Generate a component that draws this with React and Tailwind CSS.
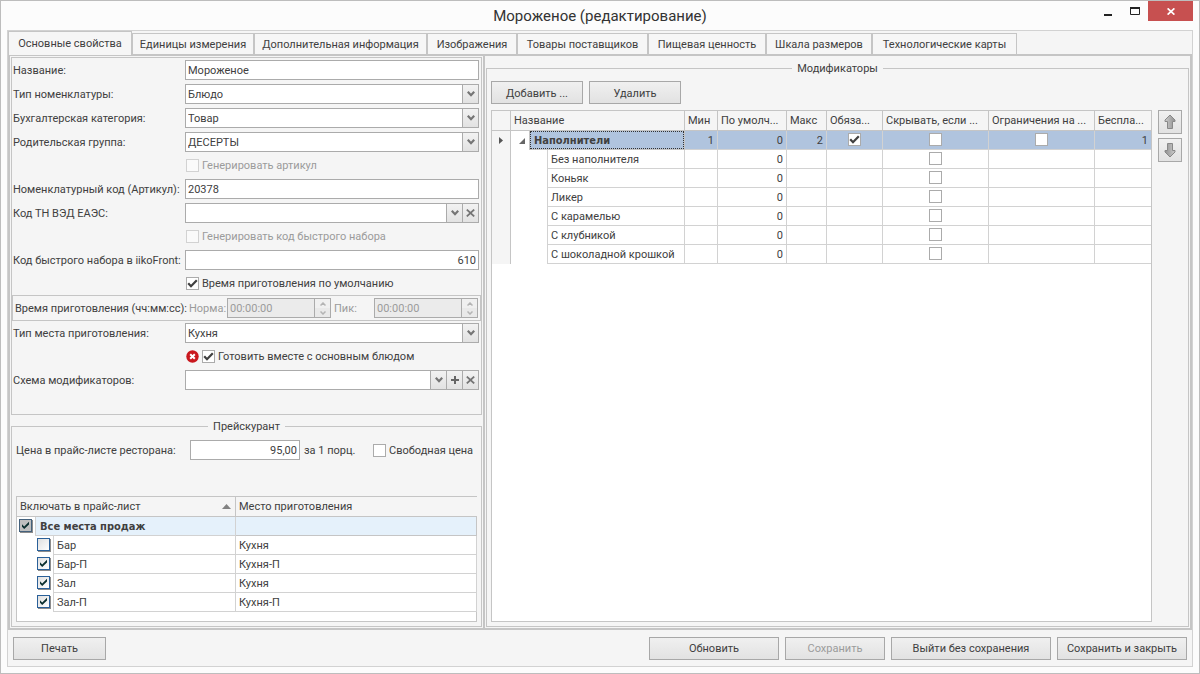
import React from "react";

const tabs = [
  ["Основные свойства", "min-w-[124px]"],
  ["Единицы измерения", "min-w-[122px]"],
  ["Дополнительная информация", "min-w-[173px]"],
  ["Изображения", "min-w-[90px]"],
  ["Товары поставщиков", "min-w-[131px]"],
  ["Пищевая ценность", "min-w-[118px]"],
  ["Шкала размеров", "min-w-[106px]"],
  ["Технологические карты", "min-w-[145px]"],
];

const modifiers = [
  "Без наполнителя",
  "Коньяк",
  "Ликер",
  "С карамелью",
  "С клубникой",
  "С шоколадной крошкой",
];

const places = [
  { name: "Бар", kitchen: "Кухня", on: false },
  { name: "Бар-П", kitchen: "Кухня-П", on: true },
  { name: "Зал", kitchen: "Кухня", on: true },
  { name: "Зал-П", kitchen: "Кухня-П", on: true },
];

function Chevron() {
  return (
    <svg width="8" height="6" viewBox="0 0 8 6" aria-hidden="true">
      <path d="M0.8 0.8L4 4.2L7.2 0.8" fill="none" stroke="#757575" strokeWidth="2.2" />
    </svg>
  );
}

function Cross() {
  return (
    <svg width="9" height="8" viewBox="0 0 9 8" aria-hidden="true">
      <path d="M0.8 0.6L8.2 7.4M8.2 0.6L0.8 7.4" stroke="#757575" strokeWidth="1.8" />
    </svg>
  );
}

function Plus() {
  return (
    <svg width="8" height="8" viewBox="0 0 8 8" aria-hidden="true">
      <path d="M0 4H8M4 0V8" stroke="#666" strokeWidth="2" />
    </svg>
  );
}

function Check({ id, label, checked, disabled }) {
  return (
    <span className="inline-grid size-[13px] shrink-0 place-items-center">
      <input
        id={id}
        type="checkbox"
        aria-label={label}
        defaultChecked={checked}
        disabled={disabled}
        className="peer [grid-area:1/1] size-[13px] appearance-none border border-[#ababab] bg-white disabled:border-[#d2d2d2] disabled:bg-[#fafafa]"
      />
      <svg
        width="11"
        height="11"
        viewBox="0 0 11 11"
        aria-hidden="true"
        className="pointer-events-none [grid-area:1/1] hidden peer-checked:block"
      >
        <path d="M1.2 5.2L4 8.2L9.8 2.2" fill="none" stroke="#404040" strokeWidth="2.2" />
      </svg>
    </span>
  );
}

function TreeCheck({ label, checked, mixed }) {
  return (
    <span className="inline-grid size-[13px] shrink-0 place-items-center">
      <input
        type="checkbox"
        aria-label={label}
        defaultChecked={checked}
        className={
          mixed
            ? "peer [grid-area:1/1] size-[13px] appearance-none border border-[#44617c] bg-[#bfbfbf] shadow-[1px_1px_0_#8c8c8c]"
            : "peer [grid-area:1/1] size-[13px] appearance-none border border-[#2a6099] bg-linear-to-br from-[#e0e0e0] to-white shadow-[1px_1px_0_#8c8c8c]"
        }
      />
      <svg
        width="9"
        height="9"
        viewBox="0 0 9 9"
        aria-hidden="true"
        className="pointer-events-none [grid-area:1/1] hidden peer-checked:block"
      >
        <path d="M1 3.2V5.8L3.2 8L8 3.4V0.8L3.2 5.4Z" fill="#0b2f2f" />
      </svg>
    </span>
  );
}

function Btn({ children, className, disabled }) {
  return (
    <button
      type="button"
      disabled={disabled}
      className={
        "h-[23px] border border-[#a8a8a8] bg-linear-to-b from-[#f0f0f0] to-[#e2e2e2] px-1 pt-px text-center whitespace-nowrap disabled:text-[#9b9b9b] " +
        className
      }
    >
      {children}
    </button>
  );
}

function Row({ label, id, children }) {
  return (
    <div className="flex h-6 items-center pr-[2px] pl-px">
      <label htmlFor={id} className="w-[172px] shrink-0 whitespace-nowrap">
        {label}
      </label>
      {children}
    </div>
  );
}

function TickRow({ id, label, checked, disabled, icon }) {
  return (
    <div className="flex h-[23px] items-center gap-[3px] pl-[174px]">
      {icon}
      <Check id={id} checked={checked} disabled={disabled} />
      <label htmlFor={id} className={disabled ? "whitespace-nowrap text-[#9b9b9b]" : "whitespace-nowrap"}>
        {label}
      </label>
    </div>
  );
}

function SelectRow({ id, label, value }) {
  return (
    <Row id={id} label={label}>
      <div className="grid h-5 min-w-0 flex-1 border border-[#ababab] bg-white">
        <select id={id} className="[grid-area:1/1] w-full appearance-none bg-transparent pr-5 pl-[2px] outline-none">
          <option>{value}</option>
        </select>
        <span className="pointer-events-none [grid-area:1/1] grid w-4 place-items-center justify-self-end border-l border-[#ababab] bg-linear-to-b from-[#f2f2f2] to-[#e2e2e2]">
          <Chevron />
        </span>
      </div>
    </Row>
  );
}

function TextField({ id, value, className }) {
  return (
    <input
      id={id}
      type="text"
      defaultValue={value}
      className={"h-5 min-w-0 border border-[#ababab] bg-white px-[2px] outline-none " + className}
    />
  );
}

function FieldButton({ label, children }) {
  return (
    <button
      type="button"
      aria-label={label}
      className="grid w-4 shrink-0 place-items-center border-l border-[#ababab] bg-linear-to-b from-[#f2f2f2] to-[#e2e2e2]"
    >
      {children}
    </button>
  );
}

function ComboRow({ id, label, plus }) {
  return (
    <Row id={id} label={label}>
      <div className="flex h-5 min-w-0 flex-1 border border-[#ababab] bg-white">
        <input id={id} type="text" className="min-w-0 flex-1 px-[2px] outline-none" />
        <FieldButton label="Открыть список">
          <Chevron />
        </FieldButton>
        {plus && (
          <FieldButton label="Добавить">
            <Plus />
          </FieldButton>
        )}
        <FieldButton label="Очистить">
          <Cross />
        </FieldButton>
      </div>
    </Row>
  );
}

function TimeField({ id }) {
  return (
    <div className="flex h-5 min-w-0 flex-1 border border-[#ababab] bg-[#ebebeb]">
      <input id={id} type="text" disabled defaultValue="00:00:00" className="min-w-0 flex-1 px-[2px] text-[#9b9b9b]" />
      <span className="flex w-4 shrink-0 flex-col border-l border-[#ababab]">
        <button type="button" disabled aria-label="Больше" className="grid flex-1 place-items-center bg-[#f0f0f0]">
          <svg width="6" height="4" viewBox="0 0 6 4" aria-hidden="true">
            <path d="M0.5 3.5L3 1L5.5 3.5" fill="none" stroke="#b4b4b4" strokeWidth="1.5" />
          </svg>
        </button>
        <button type="button" disabled aria-label="Меньше" className="grid flex-1 place-items-center bg-[#e9e9e9]">
          <svg width="6" height="4" viewBox="0 0 6 4" aria-hidden="true">
            <path d="M0.5 0.5L3 3L5.5 0.5" fill="none" stroke="#b4b4b4" strokeWidth="1.5" />
          </svg>
        </button>
      </span>
    </div>
  );
}

function ErrorIcon() {
  return (
    <svg width="13" height="13" viewBox="0 0 13 13" className="shrink-0" aria-hidden="true">
      <circle cx="6.5" cy="6.5" r="6.2" fill="#c9181e" />
      <path d="M4.2 4.2L8.8 8.8M8.8 4.2L4.2 8.8" stroke="#fff" strokeWidth="2" />
    </svg>
  );
}

function ArrowIcon({ down }) {
  return (
    <svg width="12" height="16" viewBox="0 0 12 16" className={down ? "rotate-180" : ""} aria-hidden="true">
      <defs>
        <linearGradient id={down ? "arrowDown" : "arrowUp"} x1="0" x2="1">
          <stop offset="0" stopColor="#cccccc" />
          <stop offset="1" stopColor="#909090" />
        </linearGradient>
      </defs>
      <path
        d="M6 1L11 6V7.5H8.5V14.5H3.5V7.5H1V6Z"
        fill={down ? "url(#arrowDown)" : "url(#arrowUp)"}
        stroke="#888"
        strokeWidth="1"
      />
    </svg>
  );
}

const head = "h-5 border-r border-b border-[#c5c5c5] bg-[#f5f5f5] px-[3px] py-0 text-left font-normal whitespace-nowrap overflow-hidden";
const lastHead = "h-5 border-b border-[#c5c5c5] bg-[#f5f5f5] px-[3px] py-0 text-left font-normal whitespace-nowrap overflow-hidden";
const cell = "h-[19px] border-r border-b border-[#d2d2d2] px-[3px] py-0 whitespace-nowrap overflow-hidden";

function CheckCell({ label, checked, selected }) {
  return (
    <td className={"h-[19px] border-r border-b border-[#d2d2d2] p-0 " + (selected ? "bg-[#b0c4de]" : "")}>
      <div className="flex h-[18px] items-start justify-center pt-[2px]">
        <Check label={label} checked={checked} />
      </div>
    </td>
  );
}

function PriceTable() {
  return (
    <div className="flex flex-1 flex-col border-t border-b border-l border-[#c5c5c5] bg-white">
      <table className="w-full table-fixed border-separate border-spacing-0">
        <colgroup>
          <col className="w-[219px]" />
          <col />
        </colgroup>
        <thead>
          <tr>
            <th scope="col" className={head}>
              <span className="flex items-center justify-between">
                Включать в прайс-лист
                <svg width="9" height="5" viewBox="0 0 9 5" className="mr-px" aria-hidden="true">
                  <path d="M0 5L4.5 0L9 5Z" fill="#828282" />
                </svg>
              </span>
            </th>
            <th scope="col" className={lastHead}>Место приготовления</th>
          </tr>
        </thead>
        <tbody>
          <tr>
            <td className="h-[19px] border-r border-[#d2d2d2] p-0">
              <div className="flex h-[19px]">
                <span className="flex w-[18px] shrink-0 justify-center pt-[2px] pr-px">
                  <TreeCheck label="Все места продаж" checked mixed />
                </span>
                <span className="flex flex-1 items-center border-b border-l border-[#d2d2d2] bg-[#e5f1fb] pl-1 font-['DejaVu_Sans_Condensed','DejaVu_Sans',sans-serif] font-bold">
                  Все места продаж
                </span>
              </div>
            </td>
            <td className="h-[19px] border-r border-b border-[#c5c5c5] bg-[#e5f1fb] p-0" />
          </tr>
          {places.map((p) => (
            <tr key={p.name}>
              <td className="h-[19px] border-r border-[#d2d2d2] p-0">
                <div className="flex h-[19px]">
                  <span className="flex w-9 shrink-0 justify-end pt-[2px] pr-[3px]">
                    <TreeCheck label={p.name} checked={p.on} />
                  </span>
                  <span className="flex flex-1 items-center border-b border-l border-[#d2d2d2] pl-[3px]">
                    {p.name}
                  </span>
                </div>
              </td>
              <td className={cell}>{p.kitchen}</td>
            </tr>
          ))}
        </tbody>
      </table>
      <div className="flex-1 border-r border-[#c5c5c5]" />
    </div>
  );
}

function ModifierTable() {
  return (
    <div className="min-w-0 flex-1 border border-[#c5c5c5] bg-white">
      <table className="w-full table-fixed border-separate border-spacing-0">
        <colgroup>
          <col className="w-[19px]" />
          <col />
          <col className="w-[33px]" />
          <col className="w-[69px]" />
          <col className="w-[40px]" />
          <col className="w-[56px]" />
          <col className="w-[106px]" />
          <col className="w-[106px]" />
          <col className="w-[56px]" />
        </colgroup>
        <thead>
          <tr>
            <th className={head} aria-label="Указатель строки" />
            <th scope="col" className={head}>Название</th>
            <th scope="col" className={head}>Мин</th>
            <th scope="col" className={head}>По умолч...</th>
            <th scope="col" className={head}>Макс</th>
            <th scope="col" className={head}>Обяза...</th>
            <th scope="col" className={head}>Скрывать, если ...</th>
            <th scope="col" className={head}>Ограничения на ...</th>
            <th scope="col" className={lastHead}>Беспла...</th>
          </tr>
        </thead>
        <tbody>
          <tr>
            <td className="h-[19px] border-r border-[#c5c5c5] bg-[#f5f5f5] p-0">
              <svg width="4" height="7" viewBox="0 0 4 7" className="mx-auto" aria-hidden="true">
                <path d="M0 0L4 3.5L0 7Z" fill="#555" />
              </svg>
            </td>
            <td className="h-[19px] border-r border-[#c5c5c5] p-0">
              <div className="flex h-[19px] items-center">
                <button type="button" aria-label="Свернуть" className="grid w-[18px] shrink-0 place-items-center pl-1">
                  <svg width="6" height="6" viewBox="0 0 6 6" aria-hidden="true">
                    <path d="M6 0V6H0Z" fill="#666" />
                  </svg>
                </button>
                <span className="flex h-full flex-1 border-b border-l border-[#c5c5c5] bg-[#b0c4de]">
                  <span className="flex flex-1 items-center border border-dotted border-[#333] pl-[3px] font-['DejaVu_Sans_Condensed','DejaVu_Sans',sans-serif] font-bold">
                    Наполнители
                  </span>
                </span>
              </div>
            </td>
            <td className={cell + " bg-[#b0c4de] text-right"}>1</td>
            <td className={cell + " bg-[#b0c4de] text-right"}>0</td>
            <td className={cell + " bg-[#b0c4de] text-right"}>2</td>
            <CheckCell selected label="Обязательный" checked />
            <CheckCell selected label="Скрывать" />
            <CheckCell selected label="Ограничения" />
            <td className="h-[19px] border-b border-[#d2d2d2] bg-[#b0c4de] px-[3px] py-0 text-right">1</td>
          </tr>
          {modifiers.map((m) => (
            <tr key={m}>
              <td className="h-[19px] border-r border-[#c5c5c5] bg-[#f5f5f5] p-0" />
              <td className="h-[19px] border-r border-[#d2d2d2] p-0">
                <div className="flex h-[19px] pl-9">
                  <span className="flex flex-1 items-center border-b border-l border-[#d2d2d2] pl-[3px] whitespace-nowrap">
                    {m}
                  </span>
                </div>
              </td>
              <td className={cell} />
              <td className={cell + " text-right"}>0</td>
              <td className={cell} />
              <td className={cell} />
              <CheckCell label={"Скрывать: " + m} />
              <td className={cell} />
              <td className="h-[19px] border-b border-[#d2d2d2] p-0" />
            </tr>
          ))}
        </tbody>
      </table>
    </div>
  );
}

export default function App() {
  return (
    <div className="flex min-h-screen flex-col border border-[#bdbdbd] bg-[#fcfcfc] px-[6px] pb-[6px] font-['Roboto','Noto_Sans',sans-serif] text-[11px] leading-[15px] text-[#404040]">
      <header className="grid h-[29px] grid-cols-[1fr_auto_1fr]">
        <h1 className="col-start-2 self-center text-[15px] leading-5 text-[#333]">
          Мороженое (редактирование)
        </h1>
        <div className="flex h-5 justify-end">
          <button type="button" aria-label="Свернуть окно" className="grid w-[27px] place-items-center">
            <svg width="8" height="10" viewBox="0 0 8 10" aria-hidden="true">
              <path d="M0 9H8" stroke="#222" strokeWidth="2" />
            </svg>
          </button>
          <button type="button" aria-label="Развернуть окно" className="grid w-[27px] place-items-center">
            <svg width="10" height="8" viewBox="0 0 10 8" aria-hidden="true">
              <path d="M0.5 1V7.5H9.5V1" fill="none" stroke="#222" />
              <path d="M0 1H10" stroke="#222" strokeWidth="2" />
            </svg>
          </button>
          <button type="button" aria-label="Закрыть окно" className="grid w-[45px] place-items-center bg-[#c75050]">
            <svg width="8" height="7" viewBox="0 0 8 7" aria-hidden="true">
              <path d="M0.6 0.4L7.4 6.6M7.4 0.4L0.6 6.6" stroke="#fff" strokeWidth="1.7" />
            </svg>
          </button>
        </div>
      </header>

      <main className="flex flex-1 flex-col border border-[#d2d2d2] bg-[#f5f5f5]">
        <nav role="tablist" className="flex h-[23px] items-start">
          {tabs.map(([name, width], i) => (
            <button
              key={name}
              type="button"
              role="tab"
              aria-selected={i === 0}
              className={
                (i === 0 ? "relative z-10 h-6 " : "mt-[2px] h-[21px] ") +
                "border-t border-r border-l border-[#c5c5c5] bg-[#f6f6f6] text-center whitespace-nowrap " +
                width
              }
            >
              {name}
            </button>
          ))}
        </nav>

        <div className="flex flex-1 border-2 border-[#c5c5c5]">
          <section className="flex w-[473px] shrink-0 flex-col p-px">
            <div className="h-[358px] border border-[#c5c5c5]">
              <Row id="name" label="Название:">
                <TextField id="name" value="Мороженое" className="flex-1" />
              </Row>
              <SelectRow id="type" label="Тип номенклатуры:" value="Блюдо" />
              <SelectRow id="category" label="Бухгалтерская категория:" value="Товар" />
              <SelectRow id="group" label="Родительская группа:" value="ДЕСЕРТЫ" />
              <TickRow id="genSku" label="Генерировать артикул" disabled />
              <Row id="sku" label="Номенклатурный код (Артикул):">
                <TextField id="sku" value="20378" className="flex-1" />
              </Row>
              <ComboRow id="tnved" label="Код ТН ВЭД ЕАЭС:" />
              <TickRow id="genFast" label="Генерировать код быстрого набора" disabled />
              <Row id="fast" label="Код быстрого набора в iikoFront:">
                <TextField id="fast" value="610" className="flex-1 text-right" />
              </Row>
              <TickRow id="defTime" label="Время приготовления по умолчанию" checked />
              <div className="flex h-[26px] items-center border border-[#c5c5c5] px-[2px]">
                <span className="w-[174px] shrink-0 whitespace-nowrap">Время приготовления (чч:мм:сс):</span>
                <label htmlFor="norm" className="w-[38px] shrink-0 text-[#9b9b9b]">Норма:</label>
                <TimeField id="norm" />
                <label htmlFor="peak" className="w-[43px] shrink-0 pl-[3px] text-[#9b9b9b]">Пик:</label>
                <TimeField id="peak" />
              </div>
              <SelectRow id="place" label="Тип места приготовления:" value="Кухня" />
              <TickRow id="together" label="Готовить вместе с основным блюдом" checked icon={<ErrorIcon />} />
              <ComboRow id="scheme" label="Схема модификаторов:" plus />
            </div>

            <fieldset className="mt-[3px] flex flex-1 flex-col border border-[#c5c5c5] px-1 pb-1">
              <legend className="mx-auto px-[5px] pt-[2px] leading-[14px]">Прейскурант</legend>
              <div className="mt-[6px] mb-9 flex h-5 items-center">
                <label htmlFor="price" className="w-[174px] shrink-0 whitespace-nowrap">Цена в прайс-листе ресторана:</label>
                <TextField id="price" value="95,00" className="w-[110px] text-right" />
                <span className="w-[73px] pl-1 whitespace-nowrap">за 1 порц.</span>
                <Check id="free" />
                <label htmlFor="free" className="pl-[3px] whitespace-nowrap">Свободная цена</label>
              </div>
              <PriceTable />
            </fieldset>
          </section>

          <section className="flex min-w-0 flex-1 border-l-2 border-[#c5c5c5] px-px pt-1 pb-px">
            <fieldset className="flex min-w-0 flex-1 flex-col border border-[#c5c5c5] px-1 pb-1">
              <legend className="mx-auto px-[5px] pt-[2px] leading-[14px]">Модификаторы</legend>
              <div className="mt-[5px] mb-[6px] flex gap-[6px]">
                <Btn className="w-[92px]">Добавить ...</Btn>
                <Btn className="w-[92px]">Удалить</Btn>
              </div>
              <div className="flex flex-1 gap-[6px] pr-[2px]">
                <ModifierTable />
                <div className="flex flex-col gap-1">
                  <button type="button" aria-label="Вверх" className="grid size-6 place-items-center border border-[#a8a8a8] bg-linear-to-b from-[#f0f0f0] to-[#e2e2e2]">
                    <ArrowIcon />
                  </button>
                  <button type="button" aria-label="Вниз" className="grid size-6 place-items-center border border-[#a8a8a8] bg-linear-to-b from-[#f0f0f0] to-[#e2e2e2]">
                    <ArrowIcon down />
                  </button>
                </div>
              </div>
            </fieldset>
          </section>
        </div>

        <footer className="flex h-9 items-center gap-[6px] px-[5px]">
          <Btn className="mr-auto w-[93px]">Печать</Btn>
          <Btn className="w-[130px]">Обновить</Btn>
          <Btn className="w-[100px]" disabled>Сохранить</Btn>
          <Btn className="w-[160px]">Выйти без сохранения</Btn>
          <Btn className="w-[130px]">Сохранить и закрыть</Btn>
        </footer>
      </main>
    </div>
  );
}
